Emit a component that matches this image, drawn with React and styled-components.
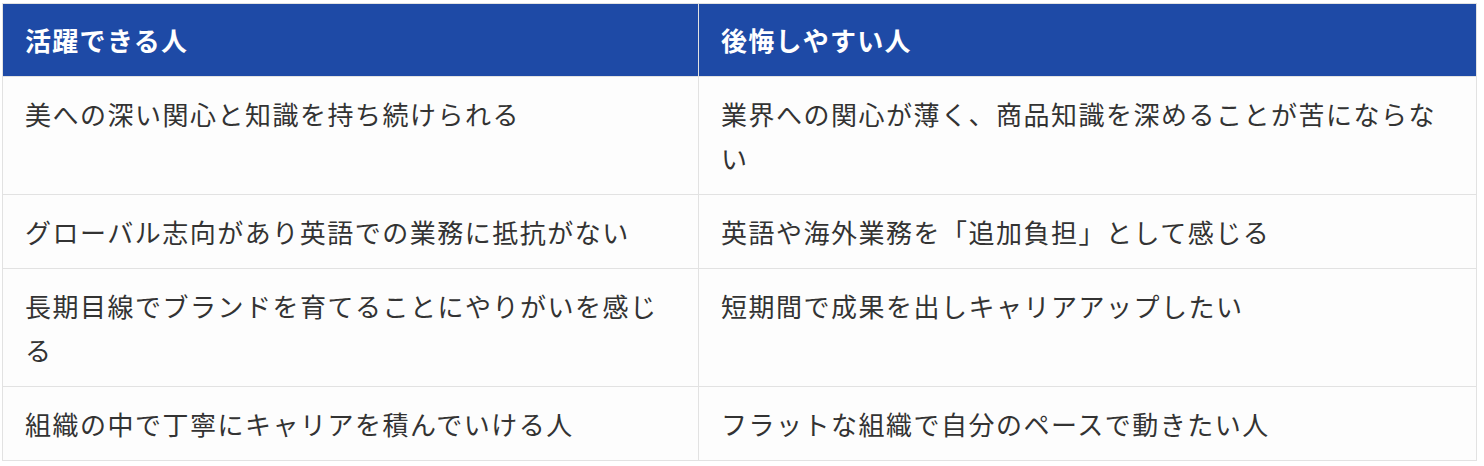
import React from 'react'
import styled, { createGlobalStyle } from 'styled-components'

const GlobalStyle = createGlobalStyle`
  html, body {
    margin: 0;
    padding: 0;
    background: #ffffff;
  }
  body {
    font-family: "Noto Sans CJK JP", "Noto Sans", sans-serif;
    color: #333333;
  }
`

const Wrap = styled.div`
  padding: 3px 7px 0 2px;
`

const Table = styled.table`
  width: 1475px;
  border-collapse: collapse;
  table-layout: fixed;
  border: 1px solid #e2e2e2;
`

const HeadCell = styled.th`
  background: #1e4aa6;
  color: #ffffff;
  font-size: 26px;
  font-weight: 700;
  line-height: 44px;
  letter-spacing: 1.3px;
  text-align: left;
  padding: 14px 24px 14px 22px;
  border-left: 1px solid #e2e2e2;
  &:first-child { border-left: none; }
`

const Row = styled.tr`
  background: #fdfdfd;
  border-top: 1px solid #e2e2e2;
`

const Cell = styled.td`
  font-size: 26px;
  font-weight: 400;
  line-height: 44px;
  letter-spacing: 1.5px;
  color: #333333;
  vertical-align: top;
  padding: 15px 24px 14px 22px;
  border-left: 1px solid #e2e2e2;
  &:first-child { border-left: none; }
`

const rows = [
  ['美への深い関心と知識を持ち続けられる', '業界への関心が薄く、商品知識を深めることが苦にならない'],
  ['グローバル志向があり英語での業務に抵抗がない', '英語や海外業務を「追加負担」として感じる'],
  ['長期目線でブランドを育てることにやりがいを感じる', '短期間で成果を出しキャリアアップしたい'],
  ['組織の中で丁寧にキャリアを積んでいける人', 'フラットな組織で自分のペースで動きたい人'],
]

const App = () => (
  <>
    <GlobalStyle />
    <Wrap>
      <Table>
        <colgroup>
          <col style={{ width: '696px' }} />
          <col />
        </colgroup>
        <thead>
          <tr>
            <HeadCell>活躍できる人</HeadCell>
            <HeadCell>後悔しやすい人</HeadCell>
          </tr>
        </thead>
        <tbody>
          {rows.map(([good, bad]) => (
            <Row key={good}>
              <Cell>{good}</Cell>
              <Cell>{bad}</Cell>
            </Row>
          ))}
        </tbody>
      </Table>
    </Wrap>
  </>
)

export default App
